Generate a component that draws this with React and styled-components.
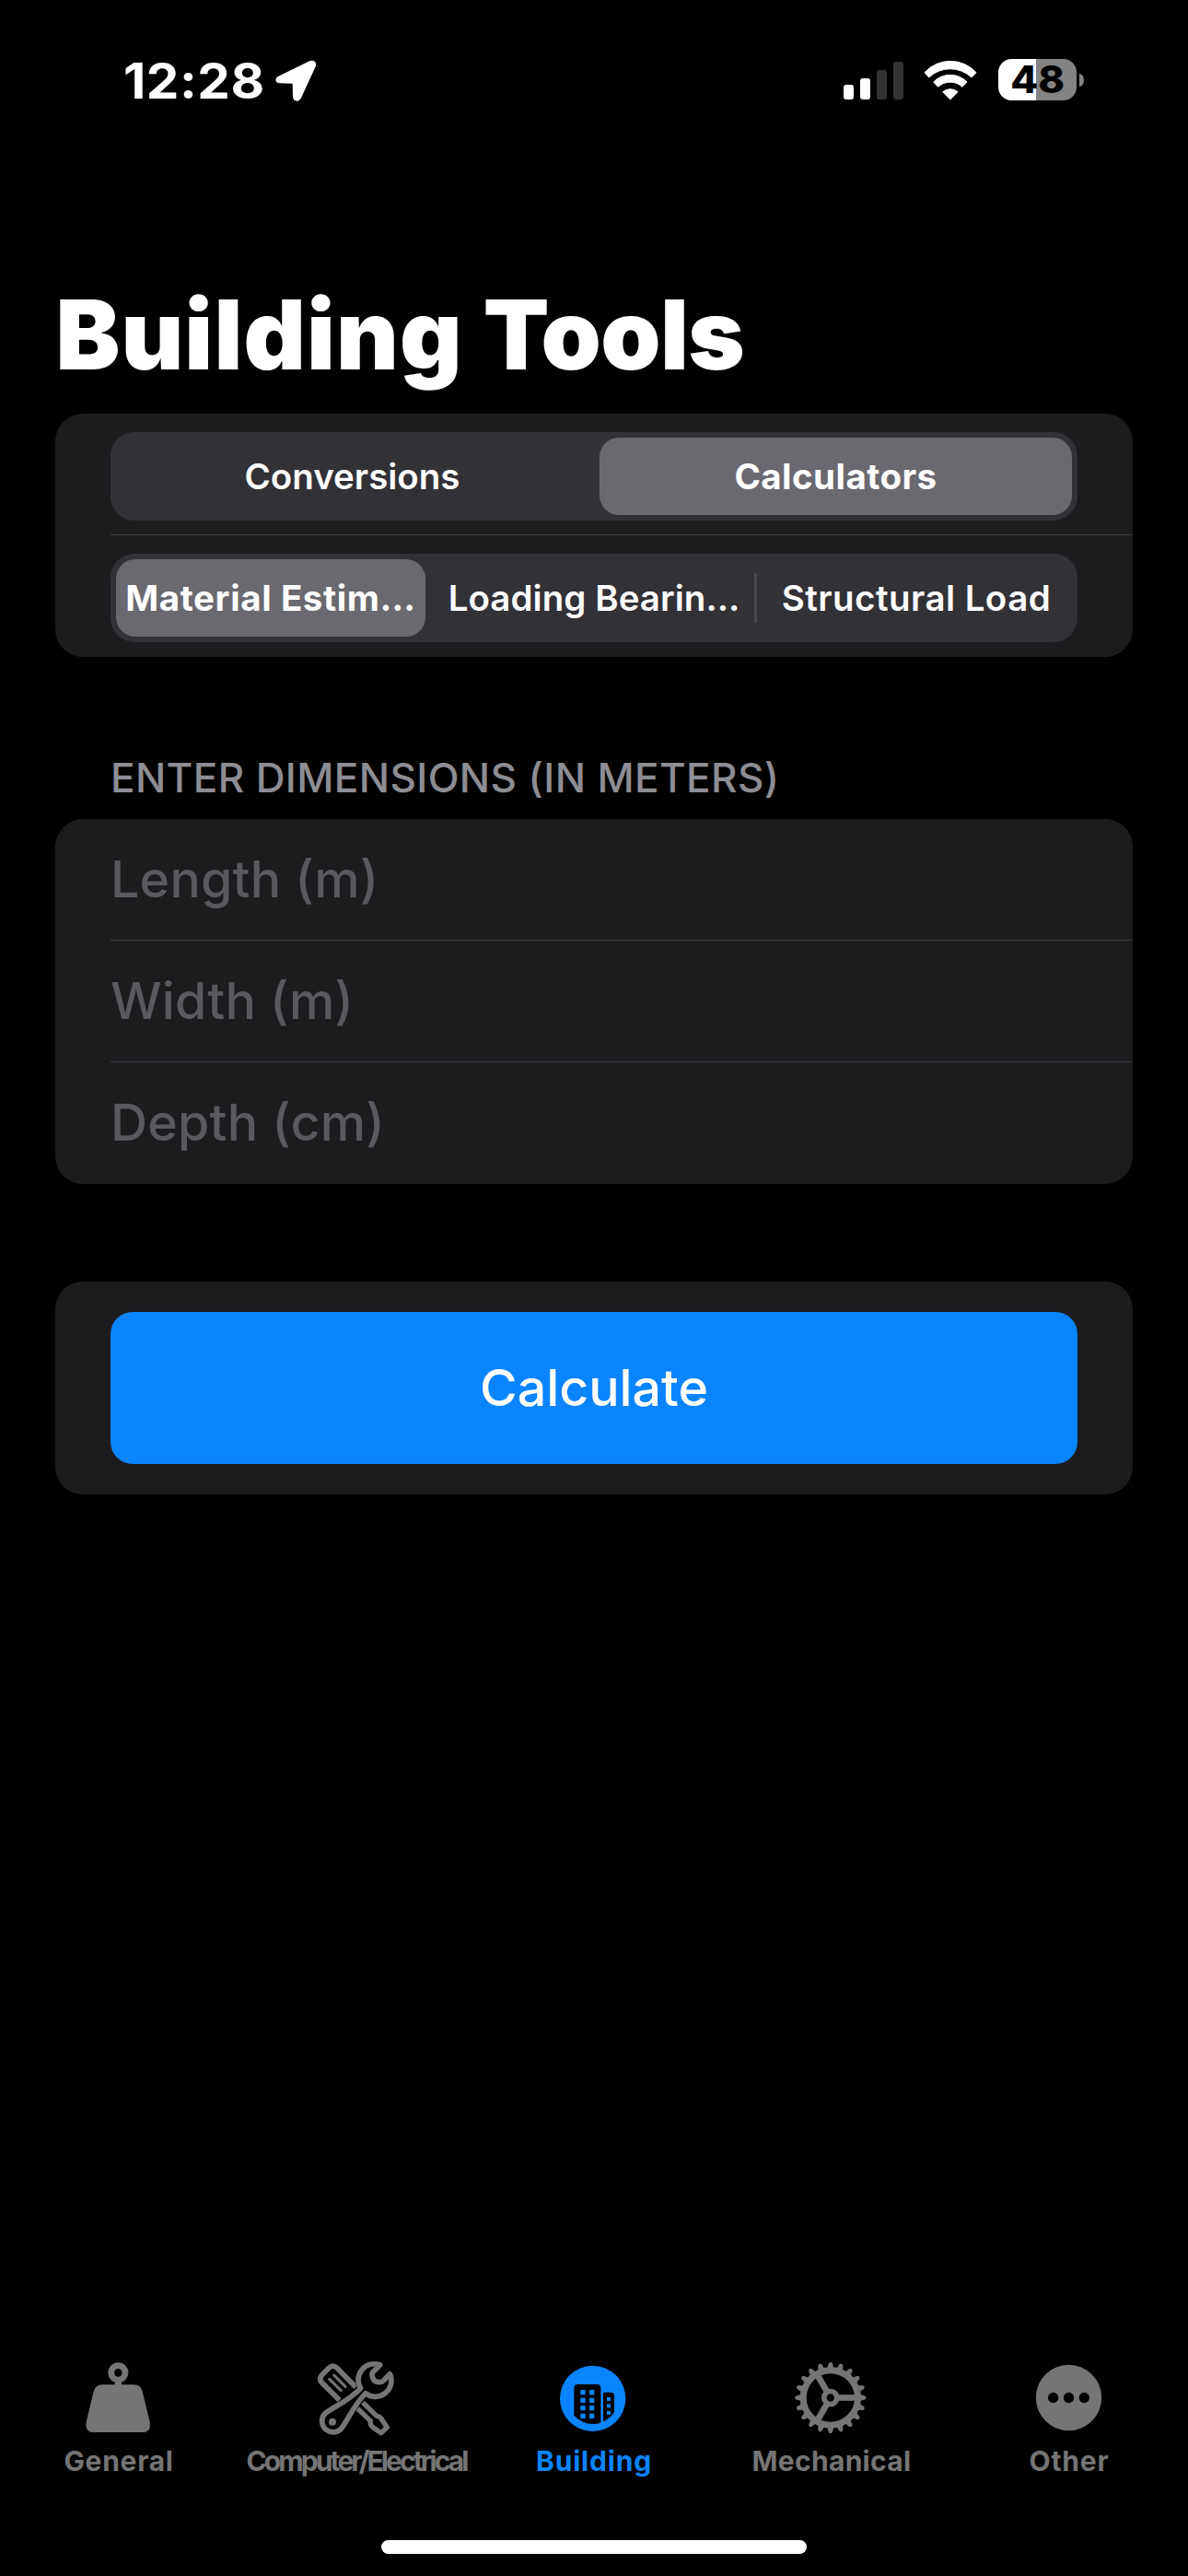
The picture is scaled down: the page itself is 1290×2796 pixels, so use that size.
import React, { useState } from 'react';
import styled, { createGlobalStyle, css } from 'styled-components';

const GlobalStyle = createGlobalStyle`
  *, *::before, *::after { box-sizing: border-box; }
  body {
    margin: 0;
    background: #000;
    color: #fff;
    font-family: Inter, "Liberation Sans", sans-serif;
  }
  button { font: inherit; color: inherit; border: 0; padding: 0; background: none; }
`;

const Screen = styled.div`
  display: flex;
  flex-direction: column;
  width: 1290px;
  height: 2796px;
  overflow: hidden;
  background: #000;
  white-space: nowrap;
`;

/* Status bar */
const StatusBar = styled.header`
  display: flex;
  justify-content: space-between;
  align-items: center;
  height: 60px;
  margin-top: 57px;
  padding: 0 113px 0 134px;
`;

const StatusGroup = styled.div`
  display: flex;
  align-items: center;
`;

const Clock = styled.span`
  width: 165px;
  padding-top: 1px;
  font-size: 53px;
  line-height: 60px;
  font-weight: 700;
  letter-spacing: 0.5px;
  transform: scaleX(1.065);
  transform-origin: left center;
`;

const StatusIcon = styled.svg`
  display: block;
  flex: none;
  margin-left: ${(p) => p.$gap || 0}px;
  margin-top: ${(p) => p.$drop || 0}px;
`;

const Battery = styled.div`
  display: flex;
  align-items: center;
  margin-left: 23px;
  margin-top: -1px;
`;

const BatteryBody = styled.div`
  display: flex;
  align-items: center;
  justify-content: center;
  width: 85px;
  height: 45px;
  border-radius: 14.5px;
  background: linear-gradient(to right, #fff 41px, #838383 41px);
`;

const BatteryLevel = styled.span`
  color: #000;
  font-size: 41px;
  line-height: 45px;
  font-weight: 800;
  transform: scaleX(1.06);
`;

const BatteryCap = styled.div`
  width: 5px;
  height: 14px;
  margin-left: 3px;
  border-radius: 0 5px 5px 0 / 0 7px 7px 0;
  background: #838383;
`;

/* Form */
const Title = styled.h1`
  margin: 196px 0 36px 60.5px;
  font-size: 104.5px;
  line-height: 100px;
  font-weight: 900;
  letter-spacing: 1.1px;
`;

const TitleWord = styled.span`
  letter-spacing: -0.6px;
`;

const Card = styled.section`
  margin: 0 60px;
  border-radius: 30px;
  background: #1c1c1e;
`;

const Row = styled.div`
  display: flex;
  flex-direction: column;
  justify-content: center;
  height: 132px;
  margin-left: 60px;
  padding-right: 60px;
  padding-top: ${(p) => (p.$lower ? 4 : 0)}px;
  border-bottom: 1px solid #3d3d41;
  &:last-child { border-bottom-color: transparent; }
`;

const Segmented = styled.div`
  display: grid;
  grid-template-columns: repeat(${(p) => p.$count}, 1fr);
  height: 96px;
  border-radius: 26px;
  background: #323136;
`;

const Segment = styled.button`
  display: flex;
  align-items: center;
  justify-content: center;
  margin: 6px;
  border-radius: 21px;
  font-size: 38.5px;
  font-weight: 600;
  letter-spacing: ${(p) => p.$tracking}px;
  ${(p) => p.$divided && css`
    background: linear-gradient(#4a494f, #4a494f) right center / 3px 54px no-repeat;
    margin-right: -2px;
    padding-right: 8px;
    border-radius: 0;
  `}
  ${(p) => p.$active && css`
    background: #6a696f;
    font-weight: 700;
    &:first-child { margin-right: 8px; }
  `}
`;

const SectionHeader = styled.h2`
  margin: 101px 0 15px 120px;
  color: #8d8d93;
  font-size: 44px;
  line-height: 60px;
  font-weight: 500;
  letter-spacing: 0.4px;
`;

const Placeholder = styled.span`
  padding-bottom: 1px;
  color: #5a5a5e;
  font-size: 55.5px;
  line-height: 66px;
  font-weight: 500;
  letter-spacing: 0.2px;
`;

const ActionCard = styled(Card)`
  margin-top: 106px;
  padding: 33px 60px;
`;

const PrimaryButton = styled.button`
  display: block;
  width: 100%;
  height: 165px;
  border-radius: 24px;
  background: #0b84ff;
  color: #fff;
  font-size: 55.5px;
  line-height: 163px;
  padding-bottom: 2px;
  font-weight: 540;
`;

/* Tab bar */
const TabBar = styled.nav`
  display: grid;
  grid-template-columns: repeat(5, 258px);
  margin-top: auto;
`;

const Tab = styled.button`
  display: flex;
  flex-direction: column;
  align-items: center;
  color: ${(p) => (p.$active ? '#0b84ff' : '#757575')};
`;

const TabIcon = styled.svg`
  display: block;
  width: 90px;
  height: 84px;
  margin-bottom: 9px;
`;

const TabLabel = styled.span`
  font-size: 30px;
  line-height: 36px;
  font-weight: 660;
  letter-spacing: ${(p) => p.$tracking}px;
`;

const HomeIndicator = styled.div`
  width: 462px;
  height: 15px;
  margin: 68px auto 24px;
  border-radius: 8px;
  background: #fff;
`;

const LocationArrow = () => (
  <StatusIcon width="44" height="46" viewBox="566 77 132 138" $drop={1}>
    <path fill="#fff" d="M576 130L677 81Q688 76 695 83Q701 90 696 101L650 201Q644 212 635 211Q624 209 623 197L622 154L580 153Q568 152 567 142Q567 134 576 130Z" />
  </StatusIcon>
);

const Signal = () => (
  <StatusIcon width="65" height="41" viewBox="0 0 65 41">
    <rect x="0" y="25" width="11" height="16" rx="3" fill="#fff" />
    <rect x="18" y="18" width="11" height="23" rx="3" fill="#fff" />
    <rect x="36" y="9" width="11" height="32" rx="3" fill="#333" />
    <rect x="54" y="0" width="11" height="41" rx="3" fill="#333" />
  </StatusIcon>
);

const Wifi = () => (
  <StatusIcon width="58" height="43" viewBox="341 74 174 129" $gap={22.5}>
    <g fill="#fff" stroke="#fff" strokeWidth="3" strokeLinejoin="round">
      <path d="M344 112A114 114 0 0 1 512 112L497 128A101 101 0 0 0 358 128Z" />
      <path d="M373 143A76 76 0 0 1 482 143L467 159A58 58 0 0 0 388 159Z" />
      <path d="M403 175A38 38 0 0 1 452 175L427.500 200Z" />
    </g>
  </StatusIcon>
);

const WeightIcon = () => (
  <TabIcon viewBox="102 60 270 252">
    <circle cx="235" cy="106" r="23" fill="none" stroke="currentColor" strokeWidth="20" />
    <path fill="currentColor" d="M224 134H246V145H286Q308 145 314 167L338 266Q343 300 314 300H156Q126 300 131 266L155 167Q161 145 184 145H224Z" />
  </TabIcon>
);

const ToolsIcon = () => (
  <TabIcon viewBox="278 60 270 252">
    <g fill="none" stroke="currentColor" strokeWidth="17" strokeLinejoin="round">
      <path d="M358 196L300 138Q290 126 300 114L324 90Q336 79 349 90L411 153" />
      <path d="M416 222L459 263Q457 277 467 284L494 302L513 284L495 257Q490 248 479 247L434 203" strokeWidth="16" />
      <path d="M325 127L363 164M340 114L377 151" strokeWidth="9" strokeLinecap="round" />
      <path d="M489 81L466 105Q461 113 468 127Q473 137 488 137Q496 137 501 132L521 111A52 52 0 0 1 443 173C402 216 393 247 366 285A36 36 0 1 1 308 242C333 218 378 207 427 157A52 52 0 0 1 489 81Z" stroke="#000" strokeWidth="20" fill="#000" />
      <path d="M490 81L466 105Q461 113 468 127Q473 137 488 137Q496 137 501 132L522 110A52 52 0 0 1 443 173C402 216 393 247 366 285A36 36 0 1 1 308 242C333 218 378 207 427 157A52 52 0 0 1 490 81Z" />
    </g>
    <circle cx="335" cy="266" r="12" fill="currentColor" />
  </TabIcon>
);

const BuildingIcon = () => (
  <TabIcon viewBox="120 60 270 252">
    <circle cx="251" cy="190" r="107" fill="currentColor" />
    <path d="M190 246V156Q190 144 202 144H265Q277 144 277 156V269Q228 283 190 246Z" fill="#000" />
    <path d="M285 170H309Q321 170 321 182V235Q307 256 285 265Z" fill="#000" />
    <g fill="currentColor">
      {[162, 188, 213, 239].map((y) => (
        <React.Fragment key={y}>
          <rect x="211" y={y} width="16" height="16" />
          <rect x="240" y={y} width="16" height="16" />
        </React.Fragment>
      ))}
      {[186, 208, 231].map((y) => (
        <rect key={y} x="297" y={y} width="12" height="12" />
      ))}
    </g>
  </TabIcon>
);

const TEETH = Array.from({ length: 20 }, (_, i) => i * 18);

const GearIcon = () => (
  <TabIcon viewBox="174 60 270 252">
    <g transform="translate(305.500 187.500)" fill="none" stroke="currentColor">
      <circle r="89" strokeWidth="21" />
      {TEETH.map((a) => (
        <path key={a} transform={`rotate(${a})`} d="M92 -14Q99 -8 110 -7Q116 -5 116 0Q116 5 110 7Q99 8 92 14Z" fill="currentColor" stroke="none" />
      ))}
      <circle r="21" strokeWidth="17" />
      {[0, 120, 240].map((a) => (
        <path key={a} transform={`rotate(${a})`} d="M26 0H84" strokeWidth="20" />
      ))}
    </g>
  </TabIcon>
);

const MoreIcon = () => (
  <TabIcon viewBox="768 60 270 252">
    <circle cx="901.500" cy="187.500" r="107" fill="currentColor" />
    <g fill="#000">
      <circle cx="851" cy="187.500" r="17" />
      <circle cx="901.500" cy="187.500" r="17" />
      <circle cx="952" cy="187.500" r="17" />
    </g>
  </TabIcon>
);

const TABS = [
  { label: 'General', Icon: WeightIcon, tracking: 0.7 },
  { label: 'Computer/Electrical', Icon: ToolsIcon, tracking: -2.9 },
  { label: 'Building', Icon: BuildingIcon, tracking: 0.8 },
  { label: 'Mechanical', Icon: GearIcon, tracking: 0.3 },
  { label: 'Other', Icon: MoreIcon, tracking: 0.8 },
];

const FIELDS = ['Length (m)', 'Width (m)', 'Depth (cm)'];

export default function App() {
  const [tab, setTab] = useState('Building');
  return (
    <Screen>
      <GlobalStyle />
      <StatusBar>
        <StatusGroup>
          <Clock>12:28</Clock>
          <LocationArrow />
        </StatusGroup>
        <StatusGroup>
          <Signal />
          <Wifi />
          <Battery>
            <BatteryBody>
              <BatteryLevel>48</BatteryLevel>
            </BatteryBody>
            <BatteryCap />
          </Battery>
        </StatusGroup>
      </StatusBar>

      <Title>
        Building <TitleWord>Tools</TitleWord>
      </Title>

      <Card>
        <Row $lower>
          <Segmented $count={2}>
            <Segment $tracking={0}>Conversions</Segment>
            <Segment $active $tracking={0.45}>Calculators</Segment>
          </Segmented>
        </Row>
        <Row $lower>
          <Segmented $count={3}>
            <Segment $active $tracking={0.6}>Material Estim…</Segment>
            <Segment $divided $tracking={0.05}>Loading Bearin…</Segment>
            <Segment $tracking={0.45}>Structural Load</Segment>
          </Segmented>
        </Row>
      </Card>

      <SectionHeader>ENTER DIMENSIONS (IN METERS)</SectionHeader>
      <Card>
        {FIELDS.map((name) => (
          <Row key={name}>
            <Placeholder>{name}</Placeholder>
          </Row>
        ))}
      </Card>

      <ActionCard>
        <PrimaryButton>Calculate</PrimaryButton>
      </ActionCard>

      <TabBar>
        {TABS.map(({ label, Icon, tracking }) => (
          <Tab key={label} $active={tab === label} onClick={() => setTab(label)}>
            <Icon />
            <TabLabel $tracking={tracking}>{label}</TabLabel>
          </Tab>
        ))}
      </TabBar>
      <HomeIndicator />
    </Screen>
  );
}
